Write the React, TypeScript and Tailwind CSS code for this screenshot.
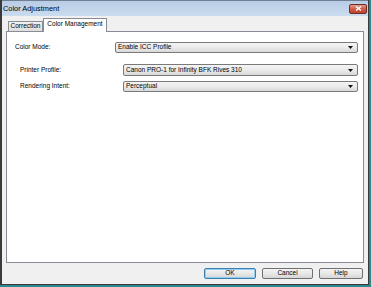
function Select({ value, className }: { value: string; className?: string }) {
  return (
    <div
      className={`flex-1 h-[11px] flex items-center justify-between rounded-[2px] border border-[#7a7a7a] bg-gradient-to-b from-[#f4f4f4] via-[#ebebeb] to-[#d9d9d9] pl-[2px] pr-[4px] ${className ?? ''}`}
    >
      <span className="text-[6.5px] leading-none">{value}</span>
      <svg width="5" height="3" viewBox="0 0 5 3">
        <path d="M0 0 H5 L2.5 3 Z" fill="#111" />
      </svg>
    </div>
  );
}

function Button({ label, primary, width }: { label: string; primary?: boolean; width: string }) {
  return (
    <div
      className={`${width} h-[11px] flex items-center justify-center rounded-[2px] border bg-gradient-to-b from-[#f3f3f3] via-[#e8e8e8] to-[#d6d6d6] text-[6.5px] leading-none ${
        primary ? 'border-[#3c7fb1] shadow-[inset_0_0_0_1px_#8fd0f2]' : 'border-[#707070]'
      }`}
    >
      {label}
    </div>
  );
}

export default function App() {
  return (
    <div className="w-[371px] h-[287px] bg-[#2a8a8f] font-['Liberation_Sans',Arial,sans-serif] text-black">
      <div className="w-[369px] h-[285px] flex flex-col border-l-2 border-r border-b border-[#3a3a3a] bg-[#f0f0f0]">
        {/* title bar */}
        <div className="h-[16px] flex items-center justify-between pl-[1px] pr-[1px] bg-gradient-to-b from-[#b8cce5] to-[#cbdcef] border-t border-[#6f7f93]">
          <span className="text-[7.4px] leading-none">Color Adjustment</span>
          <div className="w-[18px] h-[10px] flex items-center justify-center rounded-[2px] border border-[#6b2f25] bg-gradient-to-b from-[#e49b8a] via-[#cf5a45] to-[#c0412d]">
            <svg width="7" height="5" viewBox="0 0 7 5">
              <path d="M1 0.5 L6 4.5 M6 0.5 L1 4.5" stroke="#fff" strokeWidth="1.4" />
            </svg>
          </div>
        </div>

        {/* client */}
        <div className="flex-1 flex flex-col px-[4px] pt-[1px]">
          <div className="h-[14px] flex items-end pl-[2px]">
            <div className="w-[35px] h-[10px] flex items-center justify-center border border-b-0 border-[#898c95] bg-gradient-to-b from-[#f2f2f2] to-[#dedede] text-[6.5px] leading-none">
              Correction
            </div>
            <div className="relative z-10 -mb-px w-[64px] h-[14px] flex items-start justify-center pt-[2px] border border-b-0 border-[#898c95] bg-white text-[6.5px] leading-none">
              Color Management
            </div>
          </div>

          <div className="h-[232px] border border-[#898c95] bg-white flex flex-col pt-[10px] pr-[5px]">
            <div className="h-[11px] flex items-center pl-[8px]">
              <span className="w-[100px] text-[6.5px] leading-none">Color Mode:</span>
              <Select value="Enable ICC Profile" />
            </div>
            <div className="mt-[11px] h-[12px] flex items-center pl-[13px]">
              <span className="w-[103px] text-[6.5px] leading-none">Printer Profile:</span>
              <Select value="Canon PRO-1 for Infinity BFK Rives 310" className="h-[12px]" />
            </div>
            <div className="mt-[5px] h-[11px] flex items-center pl-[13px]">
              <span className="w-[103px] text-[6.5px] leading-none">Rendering Intent:</span>
              <Select value="Perceptual" />
            </div>
          </div>

          <div className="mt-[5px] flex justify-end gap-[6px] pr-[1px]">
            <Button label="OK" primary width="w-[52px]" />
            <Button label="Cancel" width="w-[51px]" />
            <Button label="Help" width="w-[44px]" />
          </div>
        </div>
      </div>
    </div>
  );
}
